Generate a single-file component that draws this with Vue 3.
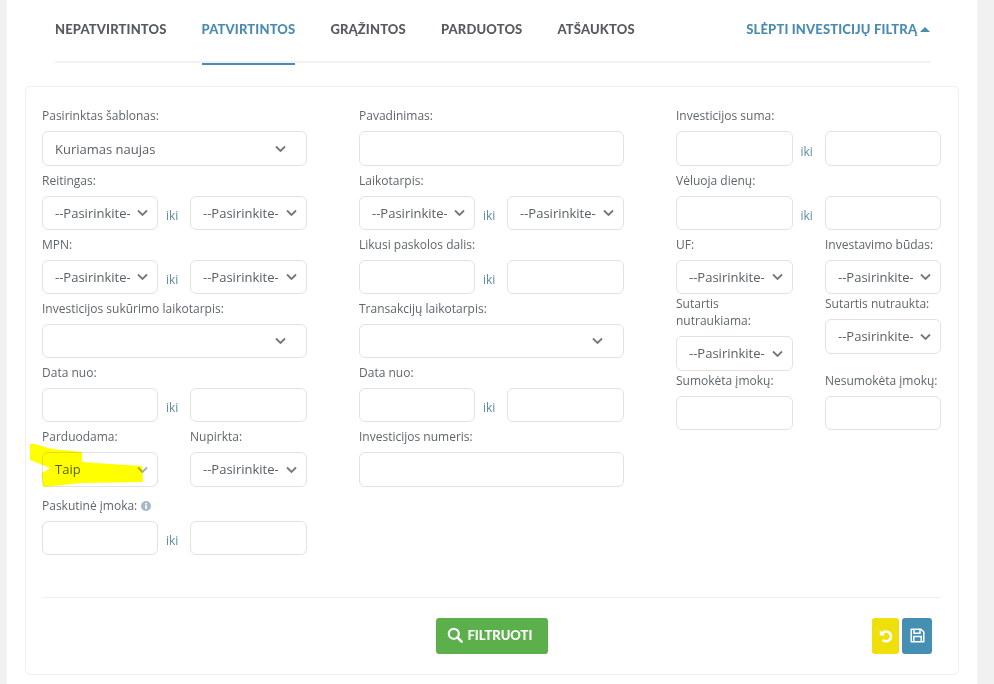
<script setup>
const tabs = [
  { name: 'NEPATVIRTINTOS' },
  { name: 'PATVIRTINTOS', active: true },
  { name: 'GRĄŽINTOS' },
  { name: 'PARDUOTOS' },
  { name: 'ATŠAUKTOS' }
]
const P = '--Pasirinkite-'
const columns = [
  [
    { kind: 'single', label: 'Pasirinktas šablonas:', type: 'select', value: 'Kuriamas naujas' },
    { kind: 'range', label: 'Reitingas:', type: 'select' },
    { kind: 'range', label: 'MPN:', type: 'select' },
    { kind: 'single', label: 'Investicijos sukūrimo laikotarpis:', type: 'select', value: '' },
    { kind: 'range', label: 'Data nuo:', type: 'input' },
    { kind: 'split', cells: [
      { label: 'Parduodama:', type: 'select', value: 'Taip', faint: true },
      { label: 'Nupirkta:', type: 'select', value: P }
    ] },
    { kind: 'range', label: 'Paskutinė įmoka:', type: 'input', info: true, extra: true }
  ],
  [
    { kind: 'single', label: 'Pavadinimas:', type: 'input' },
    { kind: 'range', label: 'Laikotarpis:', type: 'select' },
    { kind: 'range', label: 'Likusi paskolos dalis:', type: 'input' },
    { kind: 'single', label: 'Transakcijų laikotarpis:', type: 'select', value: '' },
    { kind: 'range', label: 'Data nuo:', type: 'input' },
    { kind: 'single', label: 'Investicijos numeris:', type: 'input' }
  ],
  [
    { kind: 'range', label: 'Investicijos suma:', type: 'input' },
    { kind: 'range', label: 'Vėluoja dienų:', type: 'input' },
    { kind: 'split', tight: true, cells: [
      { label: 'UF:', type: 'select', value: P },
      { label: 'Investavimo būdas:', type: 'select', value: P }
    ] },
    { kind: 'split', tight: true, cells: [
      { label: 'Sutartis nutraukiama:', type: 'select', value: P },
      { label: 'Sutartis nutraukta:', type: 'select', value: P }
    ] },
    { kind: 'split', cells: [
      { label: 'Sumokėta įmokų:', type: 'input' },
      { label: 'Nesumokėta įmokų:', type: 'input' }
    ] }
  ]
]
const chevron = 'M1 1.5 L5.5 6 L10 1.5'
</script>

<template>
  <div class="page">
    <nav class="tabs">
      <a v-for="t in tabs" :key="t.name" class="tab" :class="{ active: t.active }">{{ t.name }}</a>
      <a class="toggle">
        SLĖPTI INVESTICIJŲ FILTRĄ
        <svg class="caret" width="10" height="5" viewBox="0 0 10 5"><path d="M0 5 L5 0 L10 5 Z" fill="#4a8cb0" /></svg>
      </a>
    </nav>

    <section class="card">
      <div class="grid">
        <div v-for="(col, ci) in columns" :key="ci" class="col">
          <div
            v-for="(row, ri) in col"
            :key="ri"
            class="row"
            :class="{ tight: row.tight, extra: row.extra }"
          >
            <template v-if="row.kind === 'single'">
              <label class="lbl">{{ row.label }}</label>
              <div v-if="row.type === 'select'" class="sel">
                <select class="ctl wide"><option>{{ row.value }}</option></select>
                <svg class="chev wide-chev" width="11" height="8" viewBox="0 0 11 8"><path :d="chevron" /></svg>
              </div>
              <input v-else class="ctl" />
            </template>

            <template v-else-if="row.kind === 'range'">
              <label class="lbl">
                {{ row.label }}
                <svg v-if="row.info" class="info" width="10" height="10" viewBox="0 0 10 10">
                  <circle cx="5" cy="5" r="5" fill="#a8b8c4" />
                  <rect x="4.2" y="4.2" width="1.8" height="3.6" fill="#fff" />
                  <rect x="4.2" y="2" width="1.8" height="1.5" fill="#fff" />
                </svg>
              </label>
              <div class="pair">
                <template v-for="n in 2" :key="n">
                  <div v-if="row.type === 'select'" class="sel">
                    <select class="ctl"><option>{{ P }}</option></select>
                    <svg class="chev" width="11" height="8" viewBox="0 0 11 8"><path :d="chevron" /></svg>
                  </div>
                  <input v-else class="ctl" />
                  <span v-if="n === 1" class="iki">iki</span>
                </template>
              </div>
            </template>

            <div v-else class="split">
              <div v-for="cell in row.cells" :key="cell.label" class="cell">
                <label class="lbl">{{ cell.label }}</label>
                <div v-if="cell.type === 'select'" class="sel">
                  <select class="ctl"><option>{{ cell.value }}</option></select>
                  <svg class="chev" :class="{ faint: cell.faint }" width="11" height="8" viewBox="0 0 11 8"><path :d="chevron" /></svg>
                </div>
                <input v-else class="ctl" />
              </div>
            </div>
          </div>
        </div>
      </div>

      <footer class="actions">
        <button class="btn-filter">
          <svg width="16" height="16" viewBox="0 0 16 16" fill="none" stroke="#fff" stroke-width="2.2">
            <circle cx="6.8" cy="6.8" r="5" />
            <path d="M10.4 10.4 L14.6 14.6" stroke-linecap="round" stroke-width="2.6" />
          </svg>
          FILTRUOTI
        </button>
        <div class="side">
          <button class="btn-icon undo">
            <svg width="14" height="14" viewBox="0 0 14 14" fill="none">
              <path d="M3.4 4.2 A4.9 4.9 0 1 1 3.6 10.8" stroke="#fff" stroke-width="2.6" />
              <path d="M0.8 1 L6.2 6.4 L0.8 6.4 Z" fill="#fff" />
            </svg>
          </button>
          <button class="btn-icon save">
            <svg width="15" height="15" viewBox="0 0 15 15" fill="none" stroke="#fff" stroke-width="1.5">
              <path d="M1.2 1.2 H11 L13.8 4 V13.8 H1.2 Z" stroke-linejoin="round" />
              <path d="M4 1.4 V5.2 H10 V1.4" />
              <path d="M3.8 13.6 V8.6 H11.2 V13.6" />
            </svg>
          </button>
        </div>
      </footer>
    </section>

    <svg class="marker" width="114" height="44" viewBox="0 0 114 44">
      <path d="M0 0 L5 0 L22 5 L52 8 L52 18 L80 20 L112 22 L113 38 L52 39 L13 43 L12 29 L20 24 L0 16 Z" fill="#ffff00" />
    </svg>
  </div>
</template>

<style>
html, body { margin: 0; background: #f1f1f1; }
</style>

<style scoped>
.page {
  position: relative;
  box-sizing: border-box;
  width: 970px;
  height: 684px;
  margin-left: 7px;
  background: #fff;
  overflow: hidden;
  font-family: "Open Sans", "Liberation Sans", sans-serif;
  color: #5a6066;
}
.tabs {
  display: flex;
  align-items: stretch;
  gap: 35px;
  height: 63px;
  margin: 0 47px 0 48px;
  box-shadow: inset 0 -2px 0 #f2f2f2;
  font-family: Lato, "Liberation Sans", sans-serif;
  font-weight: 900;
  font-size: 13px;
  letter-spacing: 0.15px;
}
.tab {
  display: block;
  padding-top: 21px;
  line-height: 17px;
  color: #555b60;
  white-space: nowrap;
}
.tab.active {
  color: #4a8cb0;
  height: 65px;
  box-sizing: border-box;
  border-bottom: 2px solid #4a8cb0;
}
.toggle {
  margin-left: auto;
  padding-top: 21px;
  line-height: 17px;
  color: #4a8cb0;
  white-space: nowrap;
}
.caret { margin: 0 0 2px 0; }
.card {
  box-sizing: border-box;
  width: 934px;
  height: 589px;
  margin: 23px 0 0 18px;
  padding: 20.4px 17px 0 16px;
  border: 1px solid #f0f0f0;
  border-radius: 5px;
}
.grid {
  display: grid;
  grid-template-columns: repeat(3, 265px);
  column-gap: 52px;
  height: 489.6px;
}
.row { margin-bottom: 5.65px; }
.row.tight { margin-bottom: 1px; }
.row.extra { margin-top: 10.5px; }
.row.extra .lbl { margin-bottom: 6.5px; }
.lbl {
  display: block;
  margin-bottom: 7px;
  font-size: 12px;
  line-height: 17px;
  color: #5f666c;
}
.info { vertical-align: -1px; margin-left: 1px; }
.pair {
  display: grid;
  grid-template-columns: 116px 32px 117px;
  align-items: center;
}
.split {
  display: grid;
  grid-template-columns: 116px 117px;
  column-gap: 32px;
  align-items: start;
}
.col:nth-child(3) .pair { grid-template-columns: 116.5px 32.5px 116px; }
.col:nth-child(3) .split { grid-template-columns: 116.5px 116px; column-gap: 32.5px; }
.iki {
  padding: 5px 0 0 8px;
  font-size: 12px;
  line-height: 17px;
  color: #5f8aa6;
}
.sel { position: relative; }
.ctl {
  display: block;
  box-sizing: border-box;
  width: 100%;
  height: 34.5px;
  padding: 0 27px 0 12px;
  border: 1px solid #e2e2e2;
  border-radius: 6px;
  background: #fff;
  font-family: inherit;
  font-size: 13px;
  color: #5a6066;
  outline: none;
  appearance: none;
}
.chev {
  position: absolute;
  top: 13.5px;
  right: 10px;
  fill: none;
  stroke: #73787d;
  stroke-width: 1.8;
  pointer-events: none;
}
.chev.faint { stroke: #a9adb1; }
.wide-chev { right: 21px; }
.actions {
  position: relative;
  display: flex;
  justify-content: center;
  padding-top: 20px;
  border-top: 1px solid #f0f0f0;
}
.btn-filter {
  display: flex;
  align-items: center;
  gap: 5px;
  width: 112px;
  height: 36px;
  padding: 0 0 1px 11px;
  border: 0;
  border-radius: 3px;
  background: #5cb04c;
  color: #fff;
  font-family: Lato, "Liberation Sans", sans-serif;
  font-weight: 900;
  font-size: 13px;
}
.side {
  position: absolute;
  top: 20px;
  right: 9px;
  display: flex;
  gap: 3px;
}
.btn-icon {
  display: flex;
  align-items: center;
  justify-content: center;
  height: 36px;
  padding: 0;
  border: 0;
  border-radius: 3px;
}
.undo { width: 27px; background: #efdf0a; }
.save { width: 30px; background: #448fb2; }
.marker {
  position: absolute;
  left: 23px;
  top: 444px;
  mix-blend-mode: multiply;
  pointer-events: none;
}
</style>
